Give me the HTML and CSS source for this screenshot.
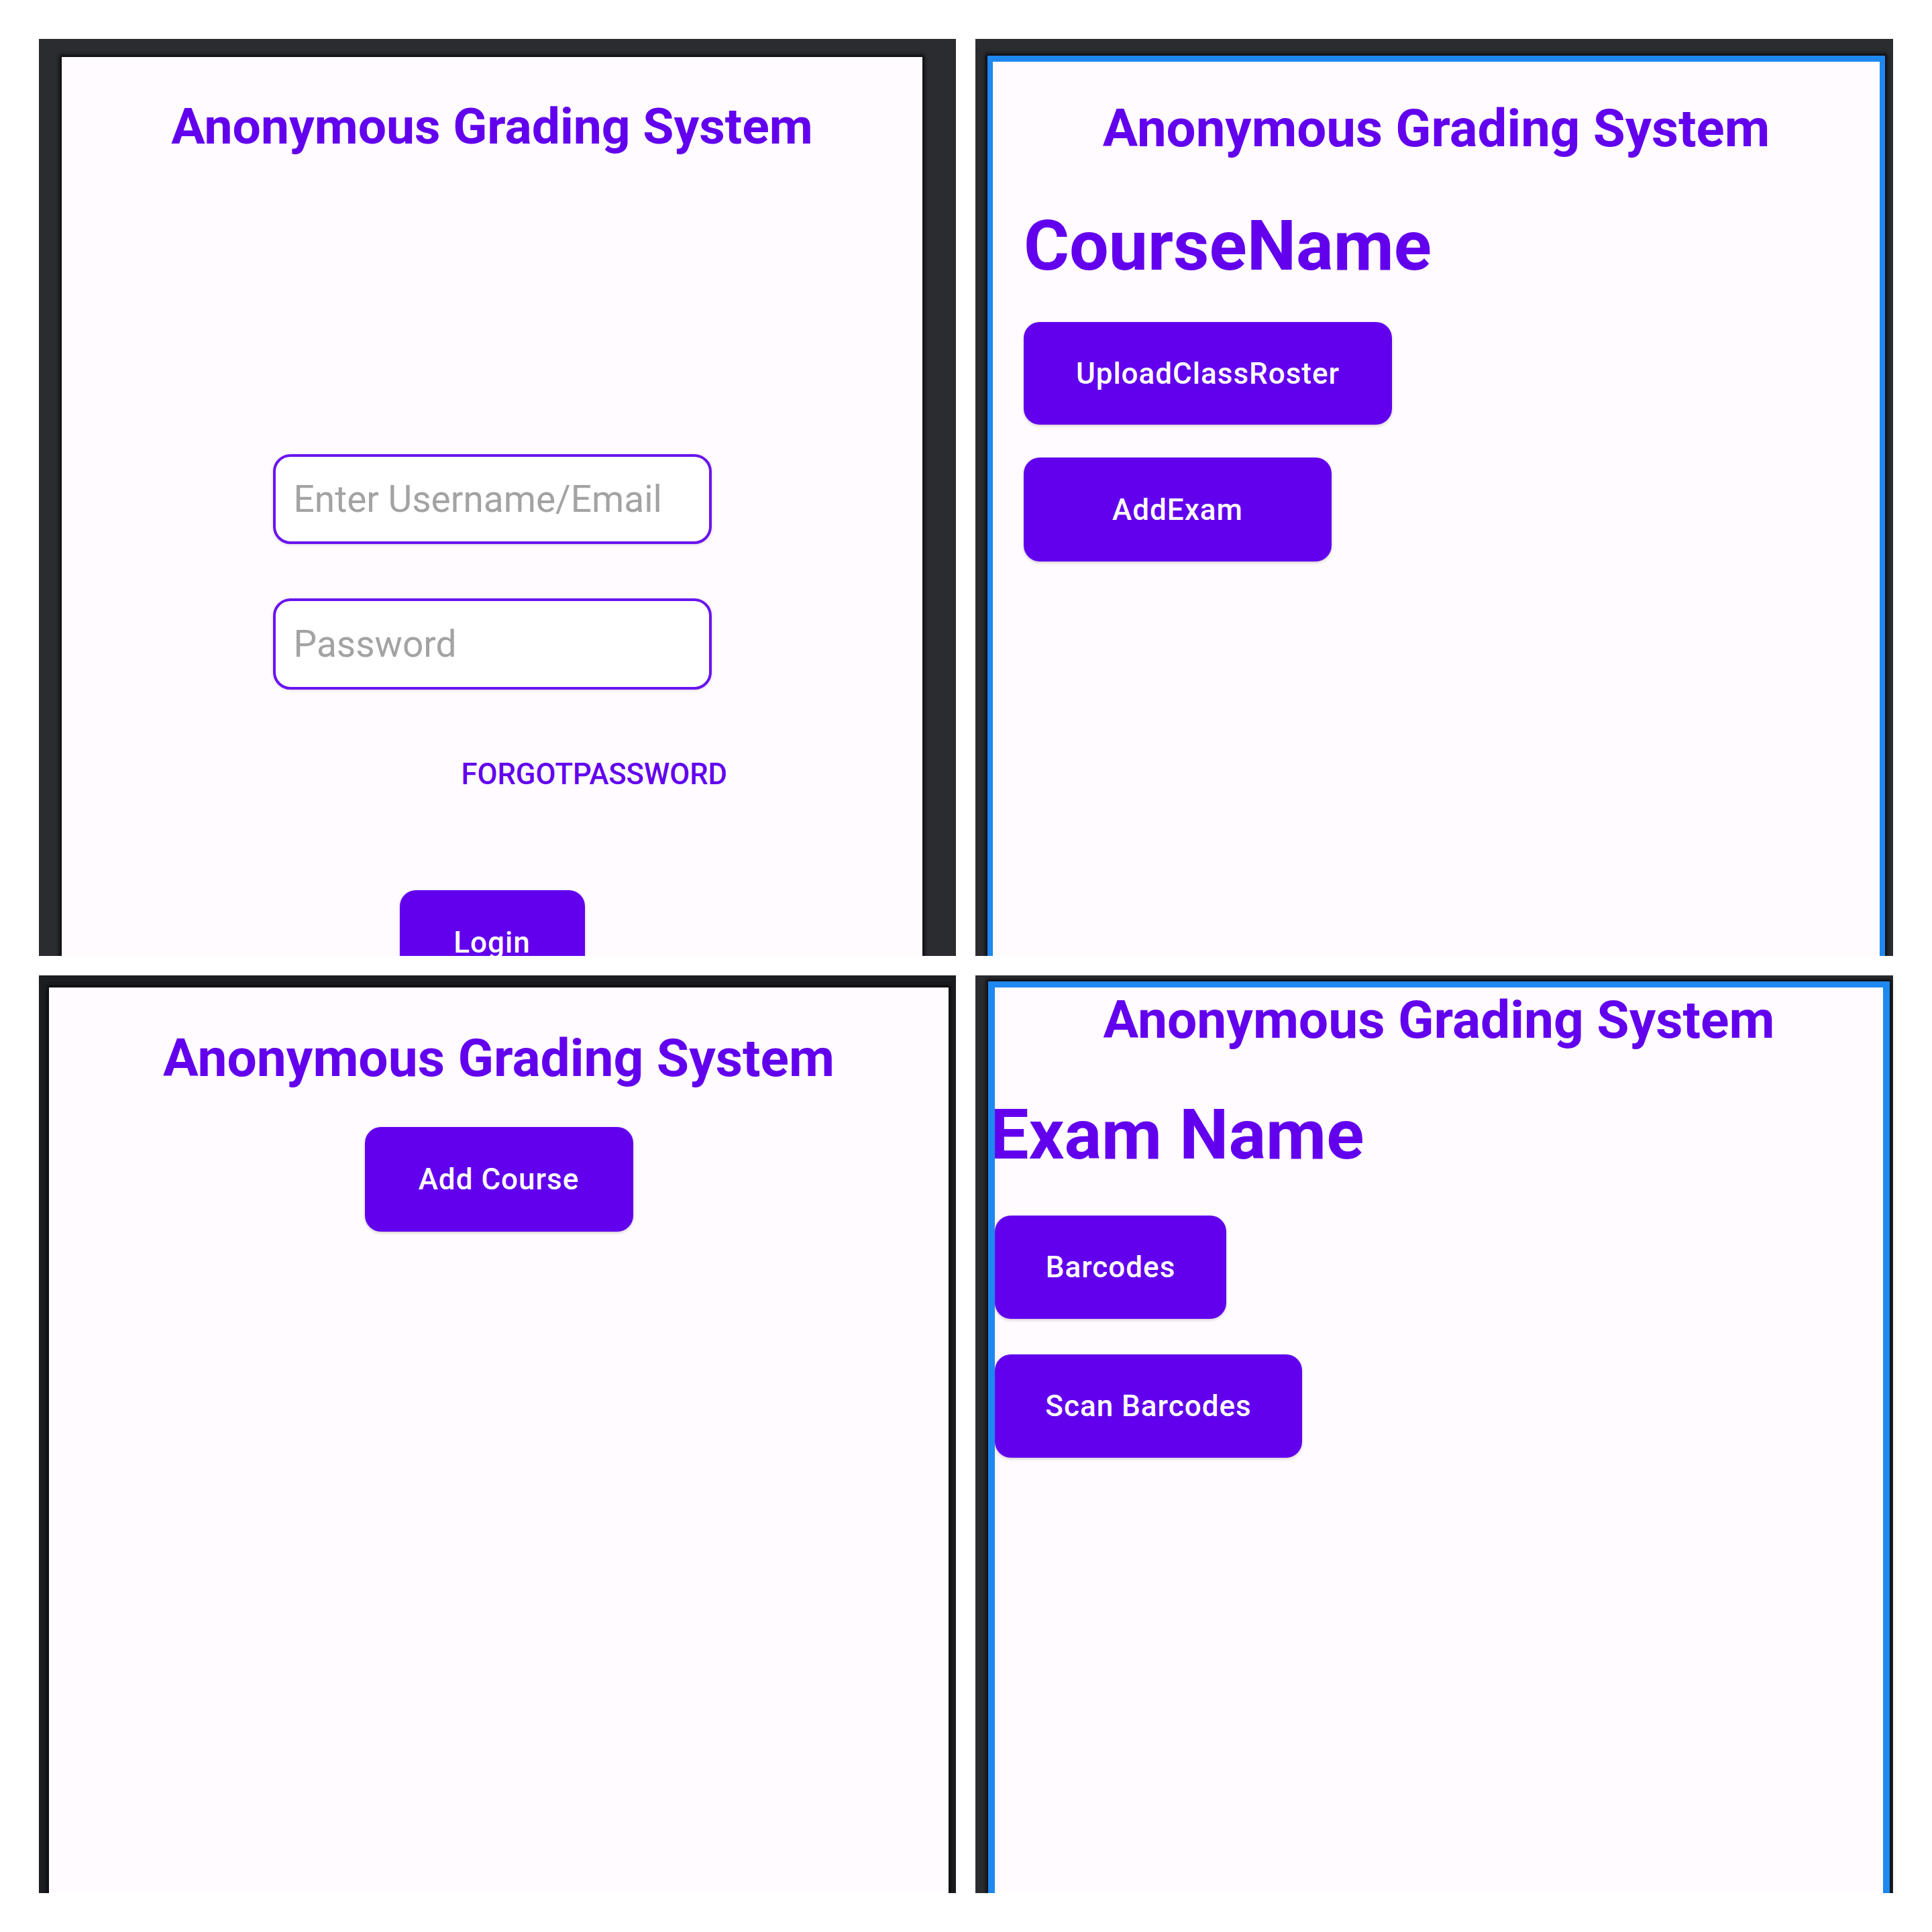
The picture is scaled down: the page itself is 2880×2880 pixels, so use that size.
FILE: index.html
```html
<!DOCTYPE html>
<html lang="en">
<head>
<meta charset="utf-8">
<title>Anonymous Grading System</title>
<link rel="stylesheet" href="styles.css">
</head>
<body>
<main class="board">
  <section class="frame frame-tl">
    <div class="screen screen-login">
      <h1 class="app-title title-tl">Anonymous Grading System</h1>
      <div class="field field-user"><span class="placeholder">Enter Username/Email</span></div>
      <div class="field field-pass"><span class="placeholder">Password</span></div>
      <div class="forgot-row"><span class="forgot">FORGOTPASSWORD</span></div>
      <div class="btn btn-login">Login</div>
    </div>
  </section>

  <section class="frame frame-tr">
    <div class="screen screen-course">
      <h1 class="app-title title-tr">Anonymous Grading System</h1>
      <div class="course-col">
        <h2 class="page-name course-name">CourseName</h2>
        <div class="btn btn-upload">UploadClassRoster</div>
        <div class="btn btn-addexam">AddExam</div>
      </div>
    </div>
  </section>

  <section class="frame frame-bl">
    <div class="screen screen-home">
      <h1 class="app-title title-bl">Anonymous Grading System</h1>
      <div class="btn btn-addcourse">Add Course</div>
    </div>
  </section>

  <section class="frame frame-br">
    <div class="screen screen-exam">
      <h1 class="app-title title-br">Anonymous Grading System</h1>
      <h2 class="page-name exam-name">Exam Name</h2>
      <div class="btn btn-barcodes">Barcodes</div>
      <div class="btn btn-scan">Scan Barcodes</div>
    </div>
  </section>
</main>
</body>
</html>
```

FILE: styles.css
```css
* { box-sizing: border-box; }

html, body {
  margin: 0;
  padding: 0;
  background: #ffffff;
}

body {
  font-family: Roboto, "Noto Sans", "Liberation Sans", sans-serif;
}

.board {
  display: grid;
  grid-template-columns: 1367px 1368px;
  grid-template-rows: 1367px 1368px;
  gap: 29px;
  padding: 58px 0 0 58px;
  width: 2880px;
  height: 2880px;
}

.frame {
  display: flex;
  flex-direction: column;
  overflow: hidden;
  background: #2b2c30;
}

.frame-tl { padding: 27px 50px 0 34px; }
.frame-tr { padding: 25px 12px 0 18px; }
.frame-bl { padding: 18px 11px 0 15px; background: #1c1d20; }
.frame-br { padding: 9px 5px 0 19px; }

.screen {
  flex: 1;
  display: flex;
  flex-direction: column;
  background: #fffbfe;
  box-shadow: 0 0 5px 3px #0b0b0d;
  overflow: hidden;
}

.screen > * { flex-shrink: 0; }

.screen-course {
  border-style: solid;
  border-color: #1e88f0;
  border-width: 9px 8px 0 8px;
}

.screen-exam {
  border-style: solid;
  border-color: #1e88f0;
  border-width: 9px 10px 0 10px;
}

.app-title {
  margin: 0;
  color: #6200ee;
  font-weight: 700;
  line-height: 1;
  text-align: center;
  white-space: nowrap;
  align-self: stretch;
}

.title-tl { font-size: 75px; margin-top: 66px; }
.title-tr { font-size: 78px; margin-top: 61px; }
.title-bl { font-size: 78.5px; margin-top: 66px; }
.title-br { font-size: 78.5px; margin-top: 9px; }

/* login screen */
.screen-login { align-items: center; }

.field {
  display: flex;
  align-items: center;
  width: 654px;
  height: 134px;
  padding-left: 27px;
  background: #ffffff;
  border: 4px solid #6a14ee;
  border-radius: 26px;
  box-shadow: 0 1px 5px rgba(0, 0, 0, 0.14);
}

.field-user { margin-top: 451px; }
.field-pass { margin-top: 81px; height: 136px; }

.placeholder {
  font-size: 55px;
  line-height: 1;
  color: #a3a3a3;
  font-weight: 400;
}

.forgot-row {
  width: 654px;
  margin-top: 105px;
  padding-left: 281px;
}

.forgot {
  display: block;
  font-size: 43.5px;
  line-height: 1;
  font-weight: 500;
  color: #6200ee;
  white-space: nowrap;
}

/* buttons */
.btn {
  display: flex;
  align-items: center;
  justify-content: center;
  height: 154px;
  background: #6200ee;
  color: #ffffff;
  border-radius: 24px;
  font-size: 44px;
  font-weight: 500;
  letter-spacing: 1px;
  line-height: 1;
  white-space: nowrap;
  box-shadow: 0 2px 4px rgba(0, 0, 0, 0.18);
  flex-shrink: 0;
}

.btn-login { width: 276px; height: 156px; margin-top: 150px; }

.course-col {
  display: flex;
  flex-direction: column;
  align-items: flex-start;
  padding-left: 46px;
}

.page-name {
  margin: 0;
  color: #6200ee;
  font-weight: 700;
  font-size: 104px;
  line-height: 1;
  white-space: nowrap;
}

.course-name { margin-top: 84px; }
.btn-upload { width: 549px; height: 153px; margin-top: 61px; }
.btn-addexam { width: 459px; height: 155px; margin-top: 49px; }

/* home screen */
.screen-home { align-items: center; }
.btn-addcourse { width: 400px; height: 156px; margin-top: 63px; }

/* exam screen */
.screen-exam { align-items: flex-start; }
.exam-name { margin-top: 80px; margin-left: -8px; }
.btn-barcodes { width: 345px; margin-top: 68px; }
.btn-scan { width: 458px; margin-top: 53px; }
```
